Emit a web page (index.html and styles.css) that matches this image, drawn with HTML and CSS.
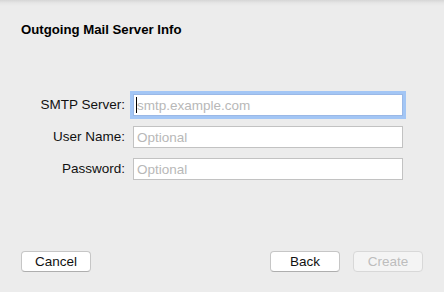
FILE: index.html
```html
<!DOCTYPE html>
<html lang="en">
<head>
    <meta charset="UTF-8">
    <title>Outgoing Mail Server Info</title>
    <link rel="stylesheet" href="styles.css">
</head>
<body>
    <div class="sheet">
        <h1 class="sheet-title">Outgoing Mail Server Info</h1>

        <div class="form">
            <label class="form-label" for="smtp">SMTP Server:</label>
            <div class="field focused">
                <span class="caret"></span>
                <input type="text" id="smtp" placeholder="smtp.example.com">
            </div>

            <label class="form-label" for="user">User Name:</label>
            <div class="field">
                <input type="text" id="user" placeholder="Optional">
            </div>

            <label class="form-label" for="pass">Password:</label>
            <div class="field">
                <input type="password" id="pass" placeholder="Optional">
            </div>
        </div>

        <div class="actions">
            <button class="btn">Cancel</button>
            <div class="actions-right">
                <button class="btn">Back</button>
                <button class="btn" disabled>Create</button>
            </div>
        </div>
    </div>
</body>
</html>
```

FILE: styles.css
```css
* {
    margin: 0;
    padding: 0;
    box-sizing: border-box;
}

body {
    font-family: 'Liberation Sans', Arial, sans-serif;
    font-size: 13.5px;
    color: #111;
    background-color: #ececec;
}

.sheet {
    height: 292px;
    display: flex;
    flex-direction: column;
    padding: 22px 21px 20px 21px;
    background: linear-gradient(#d6d6d6 0px, #e6e6e6 3px, #ececec 6px);
}

.sheet-title {
    font-size: 13.2px;
    font-weight: bold;
    line-height: 16px;
    color: #000;
}

.form {
    display: grid;
    grid-template-columns: 104px 270px;
    column-gap: 8px;
    row-gap: 10px;
    margin-top: 56px;
}

.form-label {
    text-align: right;
    line-height: 22px;
    color: #111;
    white-space: nowrap;
}

.field {
    position: relative;
    height: 22px;
    background-color: #fff;
    border: 1px solid #c2c2c2;
}

.field.focused {
    border-color: #9ab8e6;
    box-shadow: 0 0 0 3px #a3c6f5;
}

.field input {
    width: 100%;
    height: 100%;
    border: none;
    outline: none;
    padding: 0 3px;
    font-family: inherit;
    font-size: 13.5px;
    background: transparent;
    color: #111;
}

.field input::placeholder {
    color: #b8b8b8;
}

.caret {
    position: absolute;
    left: 2px;
    top: 2px;
    width: 1px;
    height: 16px;
    background-color: #000;
}

.actions {
    margin-top: auto;
    display: flex;
    justify-content: space-between;
}

.actions-right {
    display: flex;
    gap: 13px;
}

.btn {
    width: 70px;
    height: 21px;
    font-family: inherit;
    font-size: 13.5px;
    color: #111;
    background-color: #fff;
    border: 1px solid #c6c6c6;
    border-bottom-color: #aeaeae;
    border-radius: 4px;
}

.btn:disabled {
    color: #bdbdbd;
    background-color: #f4f4f4;
    border-color: #d8d8d8;
}
```
